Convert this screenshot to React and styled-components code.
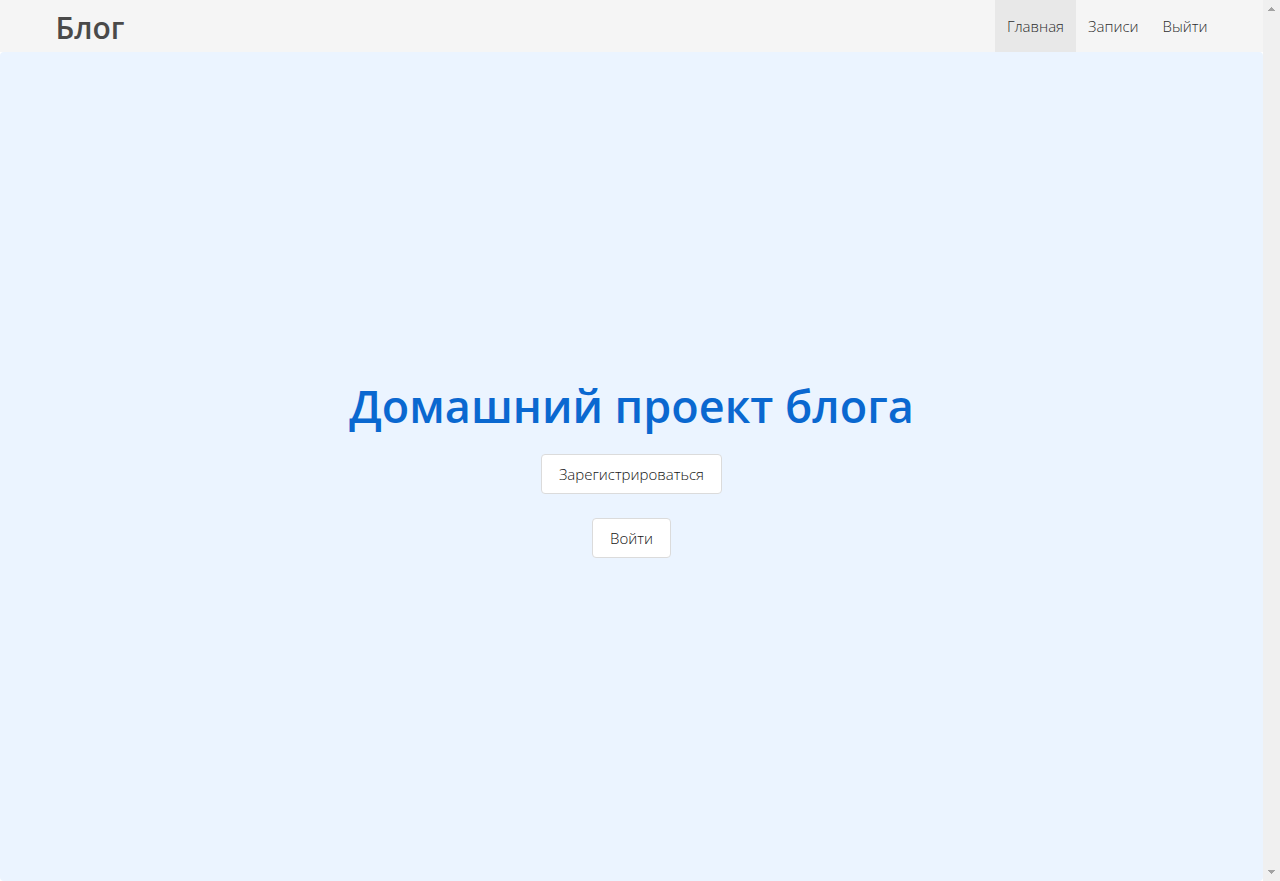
import React from "react";
import styled, { createGlobalStyle } from "styled-components";

const GlobalStyle = createGlobalStyle`
  *, *::before, *::after { box-sizing: border-box; }
  html, body, #root { height: 100%; }
  body {
    margin: 0;
    background: #ffffff;
    color: #4a4a4a;
    font-family: "Open Sans", "Noto Sans", sans-serif;
    font-size: 15px;
    line-height: 24px;
    overflow: hidden;
  }
`;

const Shell = styled.div`
  display: flex;
  min-height: 100%;
`;

const Page = styled.div`
  flex: 1;
  min-width: 0;
  display: flex;
  flex-direction: column;
`;

const Header = styled.header`
  background: #f5f5f5;
`;

const Navbar = styled.nav`
  display: flex;
  align-items: stretch;
  justify-content: space-between;
  min-height: 52px;
  max-width: 1176px;
  margin: 0 auto;
`;

const Brand = styled.a`
  display: flex;
  align-items: center;
  padding: 4px 12px 0;
  color: #4a4a4a;
  font-size: 30px;
  font-weight: 600;
  line-height: 36px;
  text-decoration: none;
`;

const Menu = styled.div`
  display: flex;
  align-items: stretch;
`;

const MenuLink = styled.a`
  display: flex;
  align-items: center;
  padding: 0 12px;
  background: ${(p) => (p.$active ? "#e8e8e8" : "transparent")};
  color: #2e2e2e;
  font-weight: 300;
  text-decoration: none;
`;

const Hero = styled.main`
  flex: 1;
  display: flex;
  flex-direction: column;
  align-items: center;
  justify-content: center;
  padding: 24px;
  border-radius: 4px;
  background: #ebf4ff;
`;

const Title = styled.h1`
  margin: 0 0 18px;
  color: #0a68d0;
  font-size: 45px;
  font-weight: 600;
  line-height: 60px;
  text-align: center;
`;

const Actions = styled.div`
  display: flex;
  flex-direction: column;
  align-items: center;
  gap: 24px;
`;

const Button = styled.button`
  height: 40px;
  padding: 0 17px;
  border: 1px solid #dbdbdb;
  border-radius: 4px;
  background: #ffffff;
  color: #141414;
  font: inherit;
  font-weight: 300;
  cursor: pointer;
`;

const Scrollbar = styled.div`
  display: flex;
  flex-direction: column;
  align-items: center;
  justify-content: space-between;
  width: 17px;
  padding: 7px 0;
  background: #f0f0f0;
`;

const Arrow = styled.svg`
  display: block;
  width: 7px;
  height: 4px;
  fill: #a3a3a3;
`;

export default function App() {
  return (
    <>
      <GlobalStyle />
      <Shell>
        <Page>
          <Header>
            <Navbar>
              <Brand href="#">Блог</Brand>
              <Menu>
                <MenuLink href="#" $active aria-current="page">Главная</MenuLink>
                <MenuLink href="#">Записи</MenuLink>
                <MenuLink href="#">Выйти</MenuLink>
              </Menu>
            </Navbar>
          </Header>
          <Hero>
            <Title>Домашний проект блога</Title>
            <Actions>
              <Button type="button">Зарегистрироваться</Button>
              <Button type="button">Войти</Button>
            </Actions>
          </Hero>
        </Page>
        <Scrollbar aria-hidden="true">
          <Arrow viewBox="0 0 7 4" shapeRendering="crispEdges"><path d="M3 0h1v1h1v1h1v1h1v1H0V3h1V2h1V1h1z" /></Arrow>
          <Arrow viewBox="0 0 7 4" shapeRendering="crispEdges"><path d="M0 0h7v1H6v1H5v1H4v1H3V3H2V2H1V1H0z" /></Arrow>
        </Scrollbar>
      </Shell>
    </>
  );
}
